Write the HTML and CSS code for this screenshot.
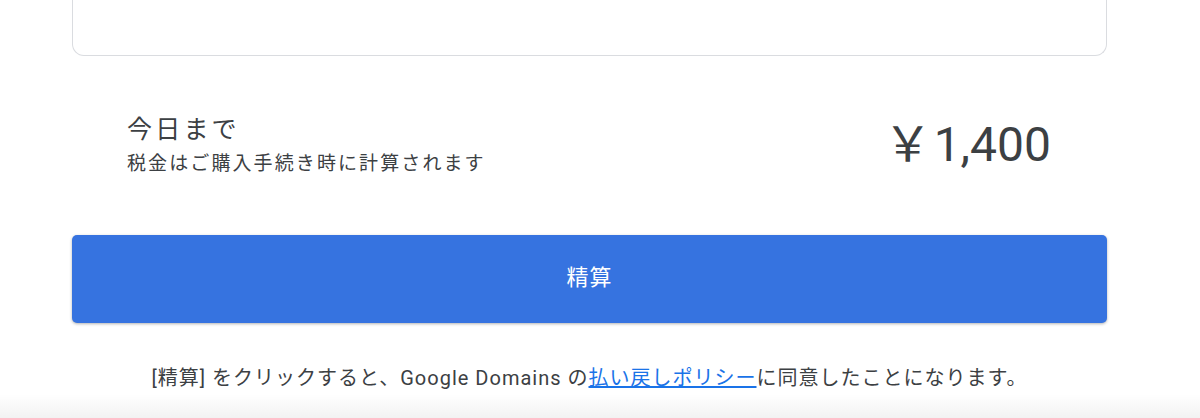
FILE: index.html
```html
<!DOCTYPE html>
<html lang="ja">
<head>
<meta charset="utf-8">
<link rel="stylesheet" href="styles.css">
</head>
<body>
<div class="page">
  <div class="card"></div>
  <div class="summary">
    <div class="summary-text">
      <div class="summary-title">今日まで</div>
      <div class="summary-note">税金はご購入手続き時に計算されます</div>
    </div>
    <div class="price"><span class="yen">￥</span>1,400</div>
  </div>
  <button class="checkout">精算</button>
  <p class="terms">[精算] をクリックすると、Google Domains の<a href="#" class="link">払い戻しポリシー</a>に同意したことになります。</p>
</div>
<div class="bottom-shade"></div>
</body>
</html>
```
FILE: styles.css
```css
html, body {
  margin: 0;
  padding: 0;
  background: #ffffff;
  height: 418px;
  overflow: hidden;
}
body {
  font-family: Roboto, "Noto Sans CJK JP", sans-serif;
  color: #3c4043;
  position: relative;
}
.page {
  width: 1035px;
  margin-left: 72px;
  display: flex;
  flex-direction: column;
}
.card {
  height: 55px;
  border: 1px solid #dadce0;
  border-top: none;
  border-radius: 0 0 12px 12px;
  background: #fff;
}
.summary {
  height: 179px;
  display: flex;
  align-items: center;
  justify-content: space-between;
  padding: 0 56px 0 55px;
}
.summary-text {
  display: flex;
  flex-direction: column;
  gap: 7px;
}
.summary-title {
  font-size: 25px;
  line-height: 30px;
  letter-spacing: 3.2px;
}
.summary-note {
  font-size: 19px;
  line-height: 24px;
  letter-spacing: 2.1px;
}
.price {
  font-size: 48px;
  line-height: 56px;
  display: flex;
  align-items: baseline;
  margin-top: -7px;
}
.yen {
  font-family: "Noto Sans CJK JP", sans-serif;
  font-size: 48px;
  margin-right: 2px;
}
.checkout {
  height: 88px;
  border: none;
  border-radius: 5px;
  background: #3673e0;
  color: #ffffff;
  font-family: Roboto, "Noto Sans CJK JP", sans-serif;
  font-size: 22px;
  letter-spacing: 1px;
  box-shadow: 0 1px 3px rgba(0,0,0,0.3);
  padding: 0 0 9px;
  cursor: pointer;
}
.terms {
  margin: 42px 0 0;
  text-align: center;
  font-size: 20px;
  line-height: 26px;
  letter-spacing: 1px;
}
.link {
  color: #1a73e8;
  text-decoration: underline;
}
.bottom-shade {
  position: absolute;
  left: 0;
  right: 0;
  bottom: 0;
  height: 24px;
  background: linear-gradient(to bottom, rgba(0,0,0,0), rgba(0,0,0,0.05));
}
```
